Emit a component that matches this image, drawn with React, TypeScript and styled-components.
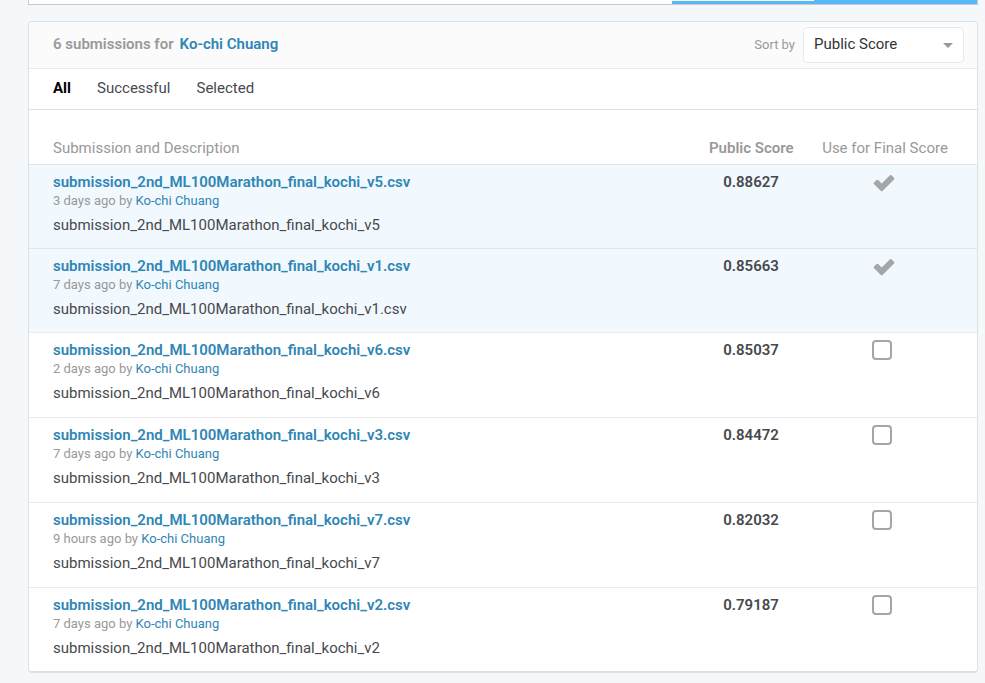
import React from "react";
import styled, { createGlobalStyle } from "styled-components";

const GlobalStyle = createGlobalStyle`
  * { box-sizing: border-box; }
  body {
    margin: 0;
    background: #f5f8fa;
    color: #47494d;
    font-family: Roboto, "Liberation Sans", sans-serif;
    font-size: 16px;
    line-height: 20px;
  }
`;

const Page = styled.div`
  padding: 0 7px 11px 28px;
`;

const Banner = styled.div`
  display: flex;
  justify-content: flex-end;
  height: 5px;
  margin-bottom: 16px;
  background: #fff;
  border: 1px solid #c8cacc;
  border-top: 0;
`;

const BannerAction = styled.div<{ $filled?: boolean }>`
  width: ${(p) => (p.$filled ? 163 : 142)}px;
  background: ${(p) => (p.$filled ? "#58b8f5" : "#fff")};
  border-bottom: 3px solid #58b8f5;
`;

const Panel = styled.section`
  background: #fff;
  border: 1px solid #dee0e2;
  border-bottom-width: 2px;
  border-radius: 4px;
  overflow: hidden;
`;

const PanelHeader = styled.header`
  display: flex;
  align-items: center;
  justify-content: space-between;
  height: 47px;
  padding: 0 13px 0 24px;
  background: #fbfbfb;
  border-bottom: 1px solid #e9eaeb;
`;

const Title = styled.h1`
  display: flex;
  gap: 6px;
  margin: 0;
  padding-bottom: 2px;
  font-size: 15px;
  font-weight: 600;
  color: #999;
`;

const UserLink = styled.a`
  color: #2f86b5;
  text-decoration: none;
`;

const SortLabel = styled.label`
  display: flex;
  align-items: center;
  gap: 8px;
  font-size: 13px;
  color: #999;
`;

const SelectBox = styled.span`
  display: grid;
  align-items: center;
  width: 161px;
  height: 36px;
  background: #fff;
  border: 1px solid #e8e9ea;
  border-radius: 4px;

  > * { grid-area: 1 / 1; }
`;

const Select = styled.select`
  width: 100%;
  height: 100%;
  padding: 0 32px 2px 10px;
  appearance: none;
  background: transparent;
  border: 0;
  color: #333;
  font-family: inherit;
  font-size: 15px;
`;

const Caret = styled.svg`
  width: 10px;
  height: 5px;
  margin-right: 10px;
  justify-self: end;
  fill: #999;
  pointer-events: none;
`;

const Filters = styled.nav`
  display: flex;
  align-items: center;
  gap: 26px;
  height: 41px;
  padding: 0 24px 3px;
  border-bottom: 1px solid #dee0e2;
`;

const Filter = styled.button<{ $active?: boolean }>`
  padding: 0;
  background: none;
  border: 0;
  font: inherit;
  font-size: 15px;
  font-weight: ${(p) => (p.$active ? 700 : 400)};
  color: ${(p) => (p.$active ? "#000" : "#47494d")};
`;

const Table = styled.table`
  width: 100%;
  border-collapse: separate;
  border-spacing: 0;
  table-layout: fixed;
`;

const HeadCell = styled.th<{ $width?: number; $strong?: boolean; $left?: boolean }>`
  height: 54px;
  width: ${(p) => (p.$width ? `${p.$width}px` : "auto")};
  padding: ${(p) => (p.$left ? "0 0 6px 24px" : "0 0 6px")};
  vertical-align: bottom;
  text-align: ${(p) => (p.$left ? "left" : "center")};
  font-size: 15px;
  font-weight: ${(p) => (p.$strong ? 600 : 400)};
  color: #999;
  white-space: nowrap;
`;

const Row = styled.tr<{ $selected: boolean }>`
  height: ${(p) => (p.$selected ? 84 : 85)}px;
  background: ${(p) => (p.$selected ? "#f1f8fe" : "#fff")};

  &:last-child { height: 84px; }

  > td { border-top: 1px solid ${(p) => (p.$selected ? "#dde7ee" : "#e9ebec")}; }
`;

const Cell = styled.td`
  padding: 7px 0 0 24px;
  vertical-align: top;
`;

const FileLink = styled.a`
  display: block;
  font-size: 15px;
  font-weight: 600;
  color: #2f86b5;
  text-decoration: none;
`;

const Meta = styled.div`
  font-size: 13px;
  line-height: 18px;
  color: #999;
`;

const Description = styled.p`
  margin: 5px 0 0;
  font-size: 15px;
`;

const Score = styled.td`
  padding: 7px 0 0;
  vertical-align: top;
  text-align: center;
  font-size: 15px;
  font-weight: 600;
`;

const Final = styled.td`
  padding: 7px 6px 0 0;
  vertical-align: top;
  text-align: center;
`;

const Check = styled.label`
  display: inline-grid;
  width: 26px;
  height: 20px;
  place-items: center;

  > * { grid-area: 1 / 1; }
`;

const CheckInput = styled.input`
  width: 20px;
  height: 20px;
  margin: 0;
  appearance: none;
  background: #fff;
  border: 2px solid #a6a6a6;
  border-radius: 4px;

  &:checked { background: none; border-color: transparent; }
  & + svg { visibility: hidden; }
  &:checked + svg { visibility: visible; }
`;

const Tick = styled.svg`
  width: 22px;
  height: 18px;
  margin: 2px 0 0 4px;
  fill: #a6a6a6;
  pointer-events: none;
`;

const USER = "Ko-chi Chuang";
const STEM = "submission_2nd_ML100Marathon_final_kochi_";

const submissions = [
  { version: "v5", description: "v5", age: "3 days ago", score: "0.88627", selected: true },
  { version: "v1", description: "v1.csv", age: "7 days ago", score: "0.85663", selected: true },
  { version: "v6", description: "v6", age: "2 days ago", score: "0.85037", selected: false },
  { version: "v3", description: "v3", age: "7 days ago", score: "0.84472", selected: false },
  { version: "v7", description: "v7", age: "9 hours ago", score: "0.82032", selected: false },
  { version: "v2", description: "v2", age: "7 days ago", score: "0.79187", selected: false },
];

export default function App() {
  return (
    <>
      <GlobalStyle />
      <Page>
        <Banner>
          <BannerAction />
          <BannerAction $filled />
        </Banner>
        <Panel>
          <PanelHeader>
            <Title>
              <span>6 submissions for</span>
              <UserLink href="#user">{USER}</UserLink>
            </Title>
            <SortLabel>
              Sort by
              <SelectBox>
                <Select defaultValue="public">
                  <option value="public">Public Score</option>
                </Select>
                <Caret viewBox="0 0 10 5"><path d="M0 0h10L5 5z" /></Caret>
              </SelectBox>
            </SortLabel>
          </PanelHeader>
          <Filters>
            <Filter $active>All</Filter>
            <Filter>Successful</Filter>
            <Filter>Selected</Filter>
          </Filters>
          <Table>
            <thead>
              <tr>
                <HeadCell $left>Submission and Description</HeadCell>
                <HeadCell $width={84} $strong>Public Score</HeadCell>
                <HeadCell $width={184}>Use for Final Score</HeadCell>
              </tr>
            </thead>
            <tbody>
              {submissions.map((s) => (
                <Row key={s.version} $selected={s.selected}>
                  <Cell>
                    <FileLink href={`#${s.version}`}>{`${STEM}${s.version}.csv`}</FileLink>
                    <Meta>
                      {s.age} by <UserLink href="#user">{USER}</UserLink>
                    </Meta>
                    <Description>{STEM + s.description}</Description>
                  </Cell>
                  <Score>{s.score}</Score>
                  <Final>
                    <Check>
                      <CheckInput
                        type="checkbox"
                        defaultChecked={s.selected}
                        aria-label={`Use ${s.version} for final score`}
                      />
                      <Tick viewBox="0 0 22 18">
                        <path d="M1 8.6 3.6 6Q4.400 5.300 5.200 6L8.700 9.500 16.900 1.300Q17.700.600 18.500 1.300L21.100 3.900Q21.800 4.700 21.100 5.500L9.500 17.100Q8.700 17.700 7.900 17.100L1 10.200Q.300 9.400 1 8.600Z" />
                      </Tick>
                    </Check>
                  </Final>
                </Row>
              ))}
            </tbody>
          </Table>
        </Panel>
      </Page>
    </>
  );
}
